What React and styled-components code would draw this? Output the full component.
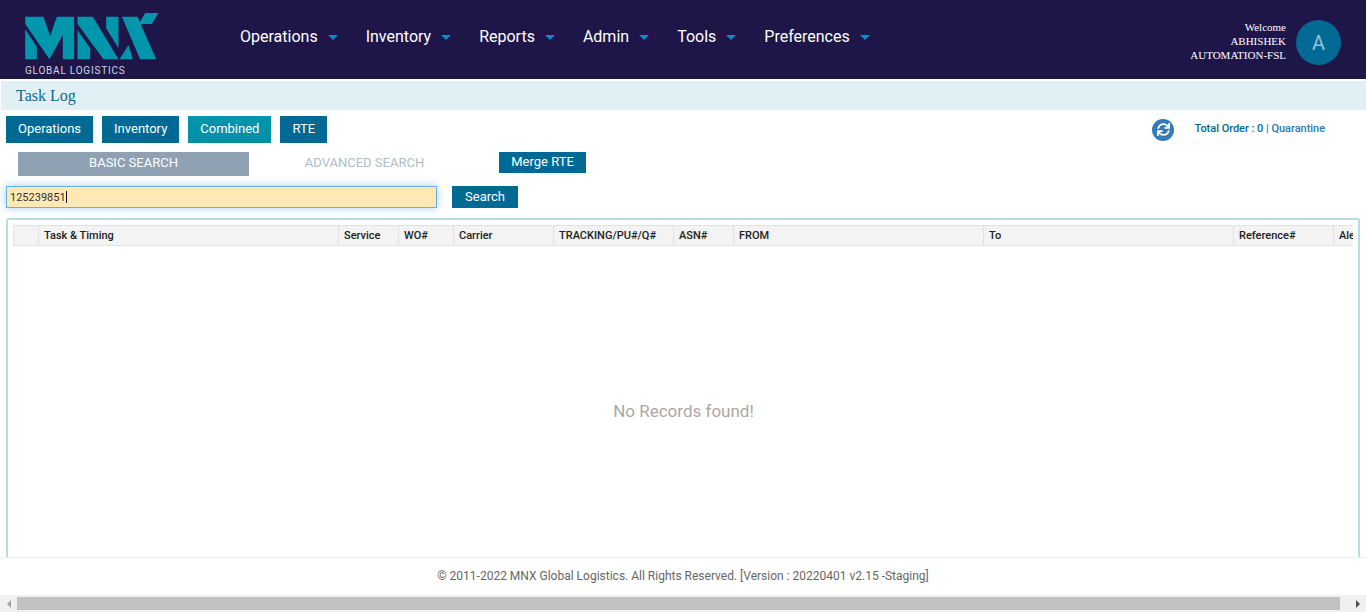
import React from 'react'
import styled, { createGlobalStyle } from 'styled-components'
import { FaSync } from 'react-icons/fa'

const GlobalStyle = createGlobalStyle`
  html, body { margin: 0; padding: 0; height: 100%; overflow: hidden; background: #fff; }
  body { font-family: Roboto, "Liberation Sans", sans-serif; }
  * { box-sizing: border-box; }
`

const Page = styled.div`
  width: 1366px;
  height: 612px;
  display: flex;
  flex-direction: column;
  overflow: hidden;
`

const Header = styled.header`
  height: 79px;
  flex: none;
  background: #1e1549;
  display: flex;
  align-items: center;
  padding: 0 25px;
`

const Brand = styled.div`
  width: 215px;
  flex: none;
  display: flex;
  flex-direction: column;
  align-self: flex-start;
  padding-top: 13px;
`

const BrandName = styled.span`
  font-size: 10px;
  line-height: 10px;
  margin-top: 6px;
  letter-spacing: 0.78px;
  color: #d5d5dd;
  white-space: nowrap;
`

const Nav = styled.nav`
  display: flex;
  gap: 28px;
  flex: 1;
  margin-top: -7px;
`

const NavItem = styled.a`
  display: flex;
  align-items: center;
  gap: 10px;
  font-size: 16px;
  color: #fff;
  white-space: nowrap;
`

const Caret = styled.i`
  width: 0;
  height: 0;
  margin-top: 2px;
  border-left: 5px solid transparent;
  border-right: 5px solid transparent;
  border-top: 5px solid #0b8bc8;
`

const UserBox = styled.div`
  display: flex;
  align-items: center;
  gap: 10px;
  margin-top: 6px;
`

const UserText = styled.div`
  margin-top: -4px;
  font-family: "Liberation Serif", serif;
  font-size: 11px;
  line-height: 14px;
  color: #fff;
  text-align: right;
`

const Avatar = styled.div`
  width: 45px;
  height: 45px;
  border-radius: 50%;
  background: #006a94;
  color: #8fc3dc;
  display: flex;
  align-items: center;
  justify-content: center;
  font-size: 20px;
`

const SubHeader = styled.div`
  height: 29px;
  flex: none;
  margin-top: 2px;
  margin-left: 1px;
  padding-left: 15px;
  background: #e1f0f4;
  color: #0a6a8e;
  font-family: "Liberation Serif", serif;
  font-size: 16px;
  line-height: 29px;
`

const Content = styled.main`
  flex: 1;
  min-height: 0;
  display: flex;
  flex-direction: column;
  overflow: hidden;
`

const TabRow = styled.div`
  display: flex;
  align-items: flex-start;
  height: 42px;
  padding: 6px 0 0 6px;
  gap: 9px;
`

const TabButton = styled.button`
  height: 27px;
  padding: 0 12px 2px;
  border: 0;
  color: #fff;
  font-family: inherit;
  font-size: 13px;
  background: ${p => (p.$active ? 'linear-gradient(#0096ab, #0090a6)' : '#006a94')};
`

const OrderInfo = styled.div`
  margin-left: auto;
  margin-right: 41px;
  display: flex;
  align-items: center;
  gap: 20px;
  height: 27px;
  font-size: 11px;
  font-weight: 500;
  letter-spacing: -0.03px;
  color: #2a7ab0;
`

const OrderText = styled.span`
  margin-top: -2px;
`

const Muted = styled.span`
  color: #006a94;
`

const RefreshIcon = styled.span`
  width: 22px;
  height: 22px;
  border-radius: 50%;
  background: #337ab7;
  color: #fff;
  display: flex;
  align-items: center;
  justify-content: center;
`

const ModeRow = styled.div`
  display: flex;
  align-items: flex-start;
  height: 24px;
  padding-left: 18px;
`

const ModeTab = styled.div`
  width: 231px;
  height: 24px;
  padding-bottom: 4px;
  display: flex;
  align-items: center;
  justify-content: center;
  font-size: 13px;
  color: ${p => (p.$active ? '#fff' : '#aebccb')};
  background: ${p => (p.$active ? '#8fa1b3' : 'transparent')};
`

const MergeButton = styled.button`
  height: 21px;
  width: 87px;
  margin-left: 19px;
  padding: 0 0 2px;
  border: 0;
  background: #006a94;
  color: #fff;
  font-family: inherit;
  font-size: 13px;
`

const SearchRow = styled.div`
  display: flex;
  align-items: center;
  padding: 10px 0 0 6px;
  gap: 15px;
`

const SearchField = styled.div`
  width: 431px;
  height: 22px;
  padding: 0 3px;
  display: flex;
  align-items: center;
  border: 1px solid #66afe9;
  background: #ffe9b3;
  box-shadow: 0 0 8px rgba(102, 175, 233, 0.6);
  font-size: 11px;
  color: #333;
`

const TextCaret = styled.i`
  width: 1px;
  height: 12px;
  background: #111;
`

const SearchButton = styled.button`
  width: 66px;
  height: 22px;
  padding: 0 0 2px;
  border: 0;
  background: #006a94;
  color: #fff;
  font-family: inherit;
  font-size: 13px;
`

const Panel = styled.section`
  flex: 1;
  min-height: 0;
  margin: 10px 6px 0 6px;
  padding: 5px 5px 0 5px;
  border: 2px solid #b5dde2;
  border-bottom: 0;
  border-radius: 3px 3px 0 0;
  display: flex;
  flex-direction: column;
  overflow: hidden;
`

const HeadRow = styled.div`
  display: flex;
  height: 21px;
  flex: none;
  overflow: hidden;
  background: #f3f3f3;
  border: 1px solid #e2e2e2;
  border-right: 0;
`

const HeadCell = styled.div`
  flex: none;
  width: ${p => p.$w}px;
  padding-left: 5px;
  border-right: 1px solid #e2e2e2;
  font-size: 11px;
  font-weight: 500;
  line-height: 19px;
  color: #222;
  white-space: nowrap;
  overflow: hidden;
`

const EmptyState = styled.div`
  flex: 1;
  display: flex;
  align-items: flex-start;
  justify-content: center;
  padding-top: 155px;
  padding-left: 1px;
  font-size: 17px;
  color: #aaa8a4;
`

const Footer = styled.footer`
  height: 38px;
  flex: none;
  background: #fff;
  border-top: 1px solid #eee;
  text-align: center;
  font-size: 12px;
  line-height: 37px;
  color: #666;
`

const ScrollBar = styled.div`
  height: 17px;
  flex: none;
  display: flex;
  align-items: center;
  background: #f0f0f0;
`

const ScrollArrow = styled.div`
  width: 17px;
  flex: none;
  display: flex;
  justify-content: center;
`

const ScrollThumb = styled.div`
  flex: 1;
  height: 13px;
  margin-right: 9px;
  background: #c1c1c1;
`

const Arrow = styled.i`
  width: 0;
  height: 0;
  border-top: 4px solid transparent;
  border-bottom: 4px solid transparent;
  ${p => (p.$dir === 'left'
    ? 'border-right: 4px solid #a3a3a3;'
    : 'border-left: 4px solid #505050;')}
`

const navItems = ['Operations', 'Inventory', 'Reports', 'Admin', 'Tools', 'Preferences']
const tabs = ['Operations', 'Inventory', 'Combined', 'RTE']
const columns = [
  ['', 25],
  ['Task & Timing', 300],
  ['Service', 60],
  ['WO#', 55],
  ['Carrier', 100],
  ['TRACKING/PU#/Q#', 120],
  ['ASN#', 60],
  ['FROM', 250],
  ['To', 250],
  ['Reference#', 100],
  ['Alert', 60],
]

// viewBox is in 3x reference coords, easier to trace the logo this way
const Logo = () => (
  <svg width="134" height="47" viewBox="75 39 401 141">
    <g fill="#0096ab">
      <polygon points="75,50 130,50 150,108 170,50 222,50 222,178 188,178 188,105 148,178 75,72" />
      <polygon points="75,88 110,140 110,178 75,178" />
      <polygon points="232,50 278,50 355,178 310,178 232,72" />
      <polygon points="232,90 270,145 270,178 232,178" />
      <polygon points="318,50 355,50 355,145 318,85" />
      <polygon points="365,50 412,50 468,178 420,178" />
      <polygon points="435,39 475,39 455,72 416,72" />
      <polygon points="358,178 398,178 385,135" />
    </g>
  </svg>
)

const App = () => (
  <Page>
    <GlobalStyle />
    <Header>
      <Brand>
        <Logo />
        <BrandName>GLOBAL LOGISTICS</BrandName>
      </Brand>
      <Nav>
        {navItems.map(item => (
          <NavItem key={item}>{item}<Caret /></NavItem>
        ))}
      </Nav>
      <UserBox>
        <UserText>Welcome<br />ABHISHEK<br />AUTOMATION-FSL</UserText>
        <Avatar>A</Avatar>
      </UserBox>
    </Header>
    <SubHeader>Task Log</SubHeader>
    <Content>
      <TabRow>
        {tabs.map(tab => (
          <TabButton key={tab} $active={tab === 'Combined'}>{tab}</TabButton>
        ))}
        <OrderInfo>
          <RefreshIcon><FaSync size={13} /></RefreshIcon>
          <OrderText><Muted>Total Order : 0 </Muted>| Quarantine</OrderText>
        </OrderInfo>
      </TabRow>
      <ModeRow>
        <ModeTab $active>BASIC SEARCH</ModeTab>
        <ModeTab>ADVANCED SEARCH</ModeTab>
        <MergeButton>Merge RTE</MergeButton>
      </ModeRow>
      <SearchRow>
        <SearchField>125239851<TextCaret /></SearchField>
        <SearchButton>Search</SearchButton>
      </SearchRow>
      <Panel>
        <HeadRow>
          {columns.map(([label, w], i) => (
            <HeadCell key={i} $w={w}>{label}</HeadCell>
          ))}
        </HeadRow>
        <EmptyState>No Records found!</EmptyState>
      </Panel>
    </Content>
    <Footer>© 2011-2022 MNX Global Logistics. All Rights Reserved. [Version : 20220401 v2.15 -Staging]</Footer>
    <ScrollBar>
      <ScrollArrow><Arrow $dir="left" /></ScrollArrow>
      <ScrollThumb />
      <ScrollArrow><Arrow $dir="right" /></ScrollArrow>
    </ScrollBar>
  </Page>
)

export default App
